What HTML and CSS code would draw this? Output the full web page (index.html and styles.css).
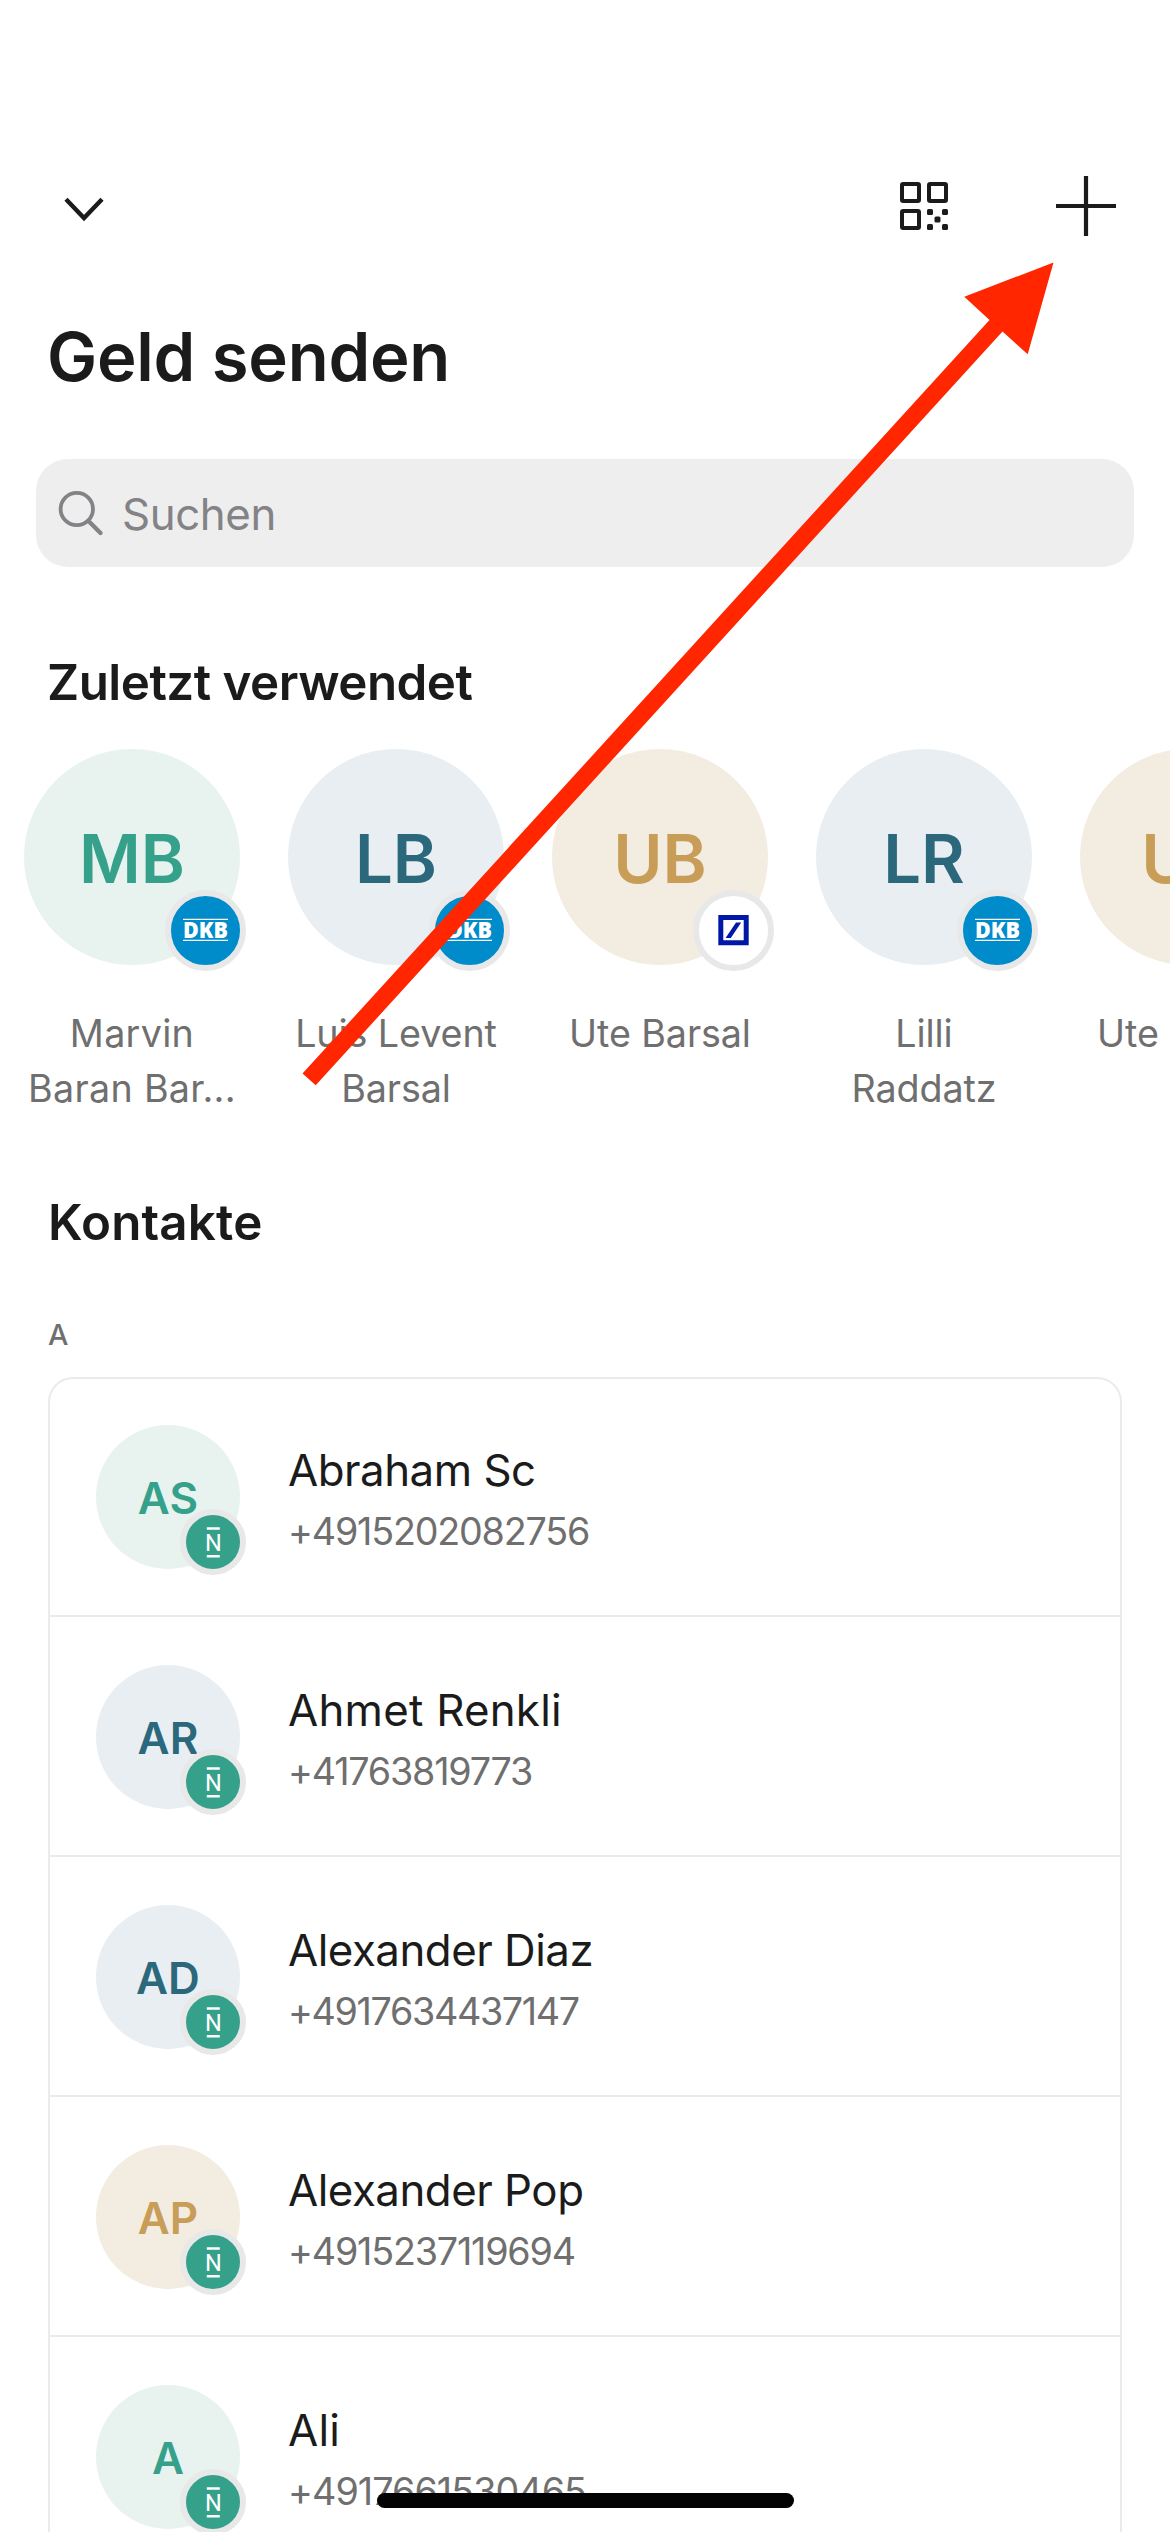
FILE: index.html
```html
<!DOCTYPE html>
<html lang="de">
<head>
<meta charset="utf-8">
<title>Geld senden</title>
<link rel="stylesheet" href="styles.css">
</head>
<body>
<div class="screen">
  <header class="nav">
    <svg class="chevron" width="44" height="28" viewBox="0 0 44 28"><path d="M4 4.200L22 23L40 4.200" fill="none" stroke="#1b1b1b" stroke-width="4.400"/></svg>
    <div class="actions">
      <svg width="48" height="48" viewBox="0 0 48 48">
        <g fill="none" stroke="#1b1b1b" stroke-width="4"><rect x="2" y="2" width="17" height="17" rx="1.200"/><rect x="29" y="2" width="17" height="17" rx="1.200"/><rect x="2" y="29" width="17" height="17" rx="1.200"/></g>
        <g fill="#1b1b1b"><rect x="27" y="27" width="6" height="6" rx="1.500"/><rect x="42" y="27" width="6" height="6" rx="1.500"/><rect x="34.500" y="34.500" width="6" height="6" rx="1.500"/><rect x="27" y="42" width="6" height="6" rx="1.500"/><rect x="42" y="42" width="6" height="6" rx="1.500"/></g>
      </svg>
      <svg class="plus" width="60" height="60" viewBox="0 0 60 60"><path d="M30 0v60M0 30h60" stroke="#1b1b1b" stroke-width="4.200"/></svg>
    </div>
  </header>
  <h1 class="title">Geld senden</h1>
  <div class="search">
    <svg width="48" height="48" viewBox="0 0 48 48" fill="none" stroke="#838387" stroke-width="3.800"><circle cx="20.800" cy="20" r="16.200"/><path d="M32.500 32L44.500 44" stroke-width="4.400" stroke-linecap="round"/></svg>
    <span>Suchen</span>
  </div>
  <h2 class="recent-title">Zuletzt verwendet</h2>
  <div class="recent">
    <div class="person">
      <div class="avatar big green">MB<svg class="badge blue" viewBox="0 0 69 69"><path d="M12 23.300h45M12 44.400h45" stroke="#fff" stroke-width="1.300"/><text x="12" y="42" textLength="45" lengthAdjust="spacingAndGlyphs">DKB</text></svg></div>
      <div class="label loose">Marvin<br>Baran Bar...</div>
    </div>
    <div class="person">
      <div class="avatar big slate">LB<svg class="badge blue" viewBox="0 0 69 69"><path d="M12 23.300h45M12 44.400h45" stroke="#fff" stroke-width="1.300"/><text x="12" y="42" textLength="45" lengthAdjust="spacingAndGlyphs">DKB</text></svg></div>
      <div class="label">Luis Levent<br>Barsal</div>
    </div>
    <div class="person">
      <div class="avatar big sand">UB<svg class="badge white" viewBox="0 0 69 69"><path d="M21.800 21.500h25.400v25.200H21.800z" fill="none" stroke="#0018a8" stroke-width="5"/><path d="M26.600 42h5.200l10.400-15.600h-5.200z" fill="#0018a8"/></svg></div>
      <div class="label">Ute Barsal</div>
    </div>
    <div class="person">
      <div class="avatar big slate">LR<svg class="badge blue" viewBox="0 0 69 69"><path d="M12 23.300h45M12 44.400h45" stroke="#fff" stroke-width="1.300"/><text x="12" y="42" textLength="45" lengthAdjust="spacingAndGlyphs">DKB</text></svg></div>
      <div class="label">Lilli<br>Raddatz</div>
    </div>
    <div class="person">
      <div class="avatar big sand">UB</div>
      <div class="label">Ute Barsal</div>
    </div>
  </div>
  <h2 class="contacts-title">Kontakte</h2>
  <div class="letter">A</div>
  <div class="card">
    <div class="row">
      <div class="avatar green">AS<svg class="badge teal" viewBox="0 0 54 54"><path d="M20.800 13.400h13M20.800 41.200h13" stroke="#fff" stroke-width="2.500"/><text x="27.300" y="35.700" text-anchor="middle">N</text></svg></div>
      <div class="info"><div class="name">Abraham Sc</div><div class="phone">+4915202082756</div></div>
    </div>
    <div class="row">
      <div class="avatar slate">AR<svg class="badge teal" viewBox="0 0 54 54"><path d="M20.800 13.400h13M20.800 41.200h13" stroke="#fff" stroke-width="2.500"/><text x="27.300" y="35.700" text-anchor="middle">N</text></svg></div>
      <div class="info"><div class="name wide">Ahmet Renkli</div><div class="phone">+41763819773</div></div>
    </div>
    <div class="row">
      <div class="avatar slate">AD<svg class="badge teal" viewBox="0 0 54 54"><path d="M20.800 13.400h13M20.800 41.200h13" stroke="#fff" stroke-width="2.500"/><text x="27.300" y="35.700" text-anchor="middle">N</text></svg></div>
      <div class="info"><div class="name">Alexander Diaz</div><div class="phone tight">+4917634437147</div></div>
    </div>
    <div class="row">
      <div class="avatar sand">AP<svg class="badge teal" viewBox="0 0 54 54"><path d="M20.800 13.400h13M20.800 41.200h13" stroke="#fff" stroke-width="2.500"/><text x="27.300" y="35.700" text-anchor="middle">N</text></svg></div>
      <div class="info"><div class="name">Alexander Pop</div><div class="phone">+4915237119694</div></div>
    </div>
    <div class="row">
      <div class="avatar green">A<svg class="badge teal" viewBox="0 0 54 54"><path d="M20.800 13.400h13M20.800 41.200h13" stroke="#fff" stroke-width="2.500"/><text x="27.300" y="35.700" text-anchor="middle">N</text></svg></div>
      <div class="info"><div class="name wide">Ali</div><div class="phone roomy">+4917661530465</div></div>
    </div>
  </div>
  <svg class="arrow" viewBox="0 0 1170 2532"><path d="M1053.500 262.500L964.300 296.700L989.500 320L302.500 1073.500L315.700 1085.300L1002.500 331.500L1027.700 354.300Z" fill="#ff2600"/></svg>
  <div class="home"></div>
</div>
</body>
</html>
```
FILE: styles.css
```css
* { box-sizing: border-box; }
body { margin: 0; background: #fff; color: #1b1b1b; font-family: Inter, "Liberation Sans", sans-serif; }
.screen { position: relative; display: flex; flex-direction: column; height: 2532px; overflow: hidden; }
.nav { display: flex; flex: none; align-items: center; justify-content: space-between; height: 140px; margin-top: 136px; padding: 0 54px 0 62px; }
.chevron { margin-top: 6px; }
.actions { display: flex; align-items: center; gap: 108px; }
.actions svg { display: block; }
h1, h2 { flex: none; margin: 0; font-weight: 600; white-space: nowrap; }
.title { margin-top: 41px; padding-left: 47px; font-size: 67px; line-height: 80px; letter-spacing: -0.25px; }
.search { display: flex; flex: none; align-items: center; gap: 18px; height: 108px; margin: 62px 36px 0; padding: 0 0 0 20px; border-radius: 32px; background: #eee; color: #838387; font-size: 43.8px; letter-spacing: -0.4px; }
.search span { padding-top: 2px; }
h2 { font-size: 49.3px; line-height: 60px; }
.recent-title { margin-top: 85px; padding-left: 47px; letter-spacing: -0.5px; }
.recent { display: flex; flex: none; gap: 48px; height: 367px; margin: 37px 0 0 24px; }
.person { flex: none; width: 216px; }
.avatar { position: relative; display: flex; flex: none; align-items: center; justify-content: center; width: 144px; height: 144px; padding-top: 2px; border-radius: 50%; font-size: 44px; font-weight: 600; letter-spacing: 0.1px; }
.big { width: 216px; height: 216px; font-size: 67px; letter-spacing: 0; }
.green { background: #e8f2ee; color: #36a18b; }
.slate { background: #e8eef2; color: #2b687c; }
.sand { background: #f3ece0; color: #c89d57; }
.badge { position: absolute; right: -6px; bottom: -6px; width: 66px; height: 66px; border: 6px solid #e8e8e8; border-radius: 50%; }
.big .badge { width: 81px; height: 81px; }
.teal { background: #36a18b; }
.blue { background: #008bcb; }
.white { background: #fff; }
.blue text { fill: #fff; font: 800 22.5px "Open Sans", sans-serif; letter-spacing: 0; }
.teal text { fill: #fff; font: 400 23.5px Roboto, sans-serif; letter-spacing: 0; }
.label { margin-top: 41px; color: #6f6f6f; font-size: 37.7px; line-height: 55px; letter-spacing: -0.1px; text-align: center; white-space: nowrap; }
.loose { letter-spacing: 0.3px; }
.contacts-title { margin-top: 76px; padding-left: 48px; letter-spacing: 0.2px; }
.letter { flex: none; margin: 65px 0 0 48px; color: #6f6f6f; font-size: 28.8px; font-weight: 500; line-height: 36px; }
.card { flex: none; margin: 24px 48px 0; border: 2px solid #ebebeb; border-radius: 25px; }
.row { display: flex; align-items: center; gap: 48px; height: 240px; padding: 2px 0 0 46px; border-bottom: 2px solid #ebebeb; }
.row:first-child { height: 238px; padding-top: 0; }
.name { font-size: 43.8px; line-height: 64px; letter-spacing: -0.48px; white-space: nowrap; }
.wide { letter-spacing: 0.25px; }
.phone { margin-top: 3px; color: #6f6f6f; font-size: 37.7px; line-height: 50px; letter-spacing: -1.2px; white-space: nowrap; }
.tight { letter-spacing: -1.35px; }
.roomy { letter-spacing: -0.95px; }
.arrow { position: absolute; inset: 0; width: 1170px; height: 2532px; }
.home { position: absolute; left: 377px; top: 2493px; width: 417px; height: 15px; border-radius: 8px; background: #030303; }
```
